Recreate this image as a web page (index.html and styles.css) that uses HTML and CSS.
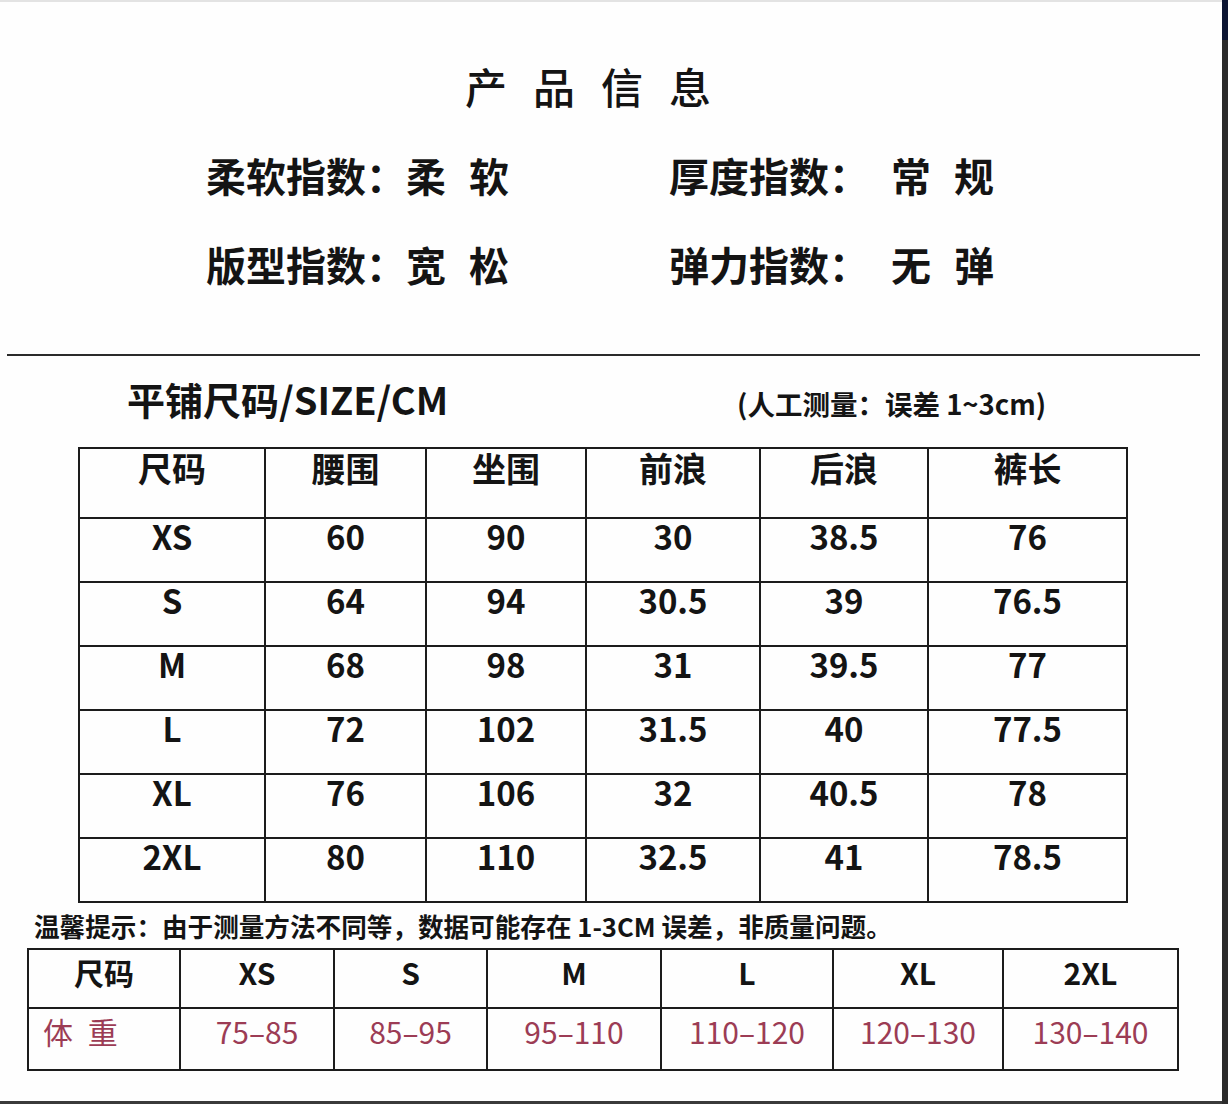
FILE: index.html
```html
<!DOCTYPE html>
<html lang="zh-CN">
<head>
<meta charset="utf-8">
<title>产品信息</title>
<link rel="stylesheet" href="styles.css">
</head>
<body>
<div class="frame">
  <main class="page">
    <h1 class="title">产品信息</h1>
    <section class="specs">
      <span class="spec-label">柔软指数：</span><span class="spec-value">柔 软</span>
      <span class="spec-label">厚度指数：</span><span class="spec-value">常 规</span>
      <span class="spec-label">版型指数：</span><span class="spec-value">宽 松</span>
      <span class="spec-label">弹力指数：</span><span class="spec-value">无 弹</span>
    </section>
    <hr class="rule">
    <div class="size-head">
      <h2 class="size-title">平铺尺码/SIZE/CM</h2>
      <span class="size-note">(人工测量：误差 1~3cm)</span>
    </div>
    <table class="size-table">
      <colgroup>
        <col style="width:186px"><col style="width:161px"><col style="width:160px"><col style="width:174px"><col style="width:168px"><col style="width:199px">
      </colgroup>
      <thead>
        <tr><th>尺码</th><th>腰围</th><th>坐围</th><th>前浪</th><th>后浪</th><th>裤长</th></tr>
      </thead>
      <tbody>
        <tr><td>XS</td><td>60</td><td>90</td><td>30</td><td>38.5</td><td>76</td></tr>
        <tr><td>S</td><td>64</td><td>94</td><td>30.5</td><td>39</td><td>76.5</td></tr>
        <tr><td>M</td><td>68</td><td>98</td><td>31</td><td>39.5</td><td>77</td></tr>
        <tr><td>L</td><td>72</td><td>102</td><td>31.5</td><td>40</td><td>77.5</td></tr>
        <tr><td>XL</td><td>76</td><td>106</td><td>32</td><td>40.5</td><td>78</td></tr>
        <tr><td>2XL</td><td>80</td><td>110</td><td>32.5</td><td>41</td><td>78.5</td></tr>
      </tbody>
    </table>
    <p class="tip">温馨提示：由于测量方法不同等，数据可能存在 1-3CM 误差，非质量问题。</p>
    <table class="weight-table">
      <colgroup>
        <col style="width:152px"><col style="width:154px"><col style="width:153px"><col style="width:174px"><col style="width:172px"><col style="width:170px"><col style="width:175px">
      </colgroup>
      <tbody>
        <tr class="w-head"><th>尺码</th><th>XS</th><th>S</th><th>M</th><th>L</th><th>XL</th><th>2XL</th></tr>
        <tr class="w-row"><th class="w-label">体 重</th><td>75–85</td><td>85–95</td><td>95–110</td><td>110–120</td><td>120–130</td><td>130–140</td></tr>
      </tbody>
    </table>
  </main>
  <div class="edge"></div>
</div>
</body>
</html>
```

FILE: styles.css
```css
html, body {
  margin: 0;
  padding: 0;
  background: #ffffff;
}

body {
  font-family: "Noto Sans CJK SC", "Noto Sans", sans-serif;
  color: #141414;
}

.frame {
  display: flex;
  width: 1228px;
  height: 1104px;
  overflow: hidden;
}

.page {
  flex: 1;
  box-sizing: border-box;
  border-top: 2px solid #e3e3e3;
  border-bottom: 3px solid #3a3a3a;
  padding-top: 54px;
  background: #fefefe;
}

.edge {
  width: 6px;
  background: linear-gradient(#0c1633 0, #0c1633 40px, #2b2b2b 40px);
}

.title {
  margin: 0;
  font-size: 42px;
  line-height: 60px;
  font-weight: 500;
  letter-spacing: 26px;
  text-align: center;
  padding-right: 20px;
}

.specs {
  display: grid;
  grid-template-columns: 200px 263px 222px auto;
  row-gap: 29px;
  margin-top: 29px;
  padding-left: 206px;
  font-size: 40px;
  line-height: 60px;
  font-weight: 700;
  white-space: nowrap;
}

.spec-value {
  word-spacing: 14px;
}

.rule {
  margin: 60px 0 0 7px;
  width: 1193px;
  height: 2px;
  border: 0;
  background: #2a2a2a;
}

.size-head {
  display: grid;
  grid-template-columns: 610px auto;
  align-items: baseline;
  margin-top: 21px;
  padding-left: 127px;
  white-space: nowrap;
}

.size-title {
  margin: 0;
  font-size: 38px;
  line-height: 44px;
  font-weight: 700;
}

.size-note {
  font-size: 27.5px;
  font-weight: 700;
}

.size-table {
  border-collapse: collapse;
  table-layout: fixed;
  width: 1050px;
  margin: 24px 0 0 78px;
}

.size-table th,
.size-table td {
  border: 2px solid #1c1c1c;
  padding: 0;
  vertical-align: top;
  text-align: center;
}

.size-table th {
  height: 68px;
  font-size: 34px;
  line-height: 38px;
  font-weight: 700;
}

.size-table td {
  height: 62px;
  font-size: 33px;
  line-height: 34px;
  font-weight: 600;
}

.tip {
  margin: 8px 0 0 34px;
  font-size: 25.6px;
  line-height: 30px;
  font-weight: 700;
  white-space: nowrap;
}

.weight-table {
  border-collapse: collapse;
  table-layout: fixed;
  width: 1152px;
  margin: 7px 0 0 27px;
}

.weight-table th,
.weight-table td {
  border: 2px solid #1c1c1c;
  padding: 0;
  vertical-align: top;
  text-align: center;
}

.w-head th {
  height: 53px;
  padding-top: 4px;
  font-size: 30px;
  line-height: 36px;
  font-weight: 700;
}

.w-row th,
.w-row td {
  height: 57px;
  padding-top: 3px;
  font-size: 30px;
  line-height: 38px;
  font-weight: 400;
  color: #9c3c55;
}

.w-row .w-label {
  text-align: left;
  padding-left: 14px;
  font-size: 30px;
  word-spacing: 8px;
}
```
